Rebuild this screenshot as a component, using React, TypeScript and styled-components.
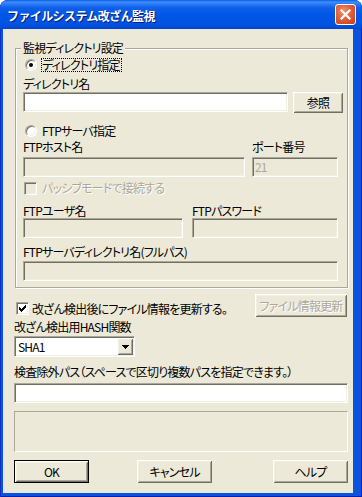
import React from "react";
import styled, { createGlobalStyle, css } from "styled-components";

const FONT = `"Noto Sans CJK JP", "Noto Sans CJK SC", "Noto Sans", sans-serif`;

const GlobalStyle = createGlobalStyle`
  html, body { margin: 0; padding: 0; background: #ffffff; }
  body { font-family: ${FONT}; font-size: 12px; }
  #root { width: 362px; height: 497px; }
`;

const Window = styled.div`
  width: 362px;
  height: 497px;
  display: flex;
  flex-direction: column;
  background: #0A52E0;
  border-radius: 8px 8px 0 0;
  overflow: hidden;
  box-shadow: inset 1px 0 0 #0A32C4, inset -1px 0 0 #0022A8, inset 0 -1px 0 #0022A8;
  font-family: ${FONT};
  font-feature-settings: "palt";
  font-size: 12px;
  letter-spacing: -0.8px;
  color: #000;
`;

const TitleBar = styled.div`
  flex: none;
  height: 29px;
  box-sizing: border-box;
  display: flex;
  align-items: center;
  justify-content: space-between;
  padding: 0 6px 0 7px;
  border-radius: 8px 8px 0 0;
  background: linear-gradient(
    180deg,
    #0A5AE8 0px,
    #3E8FFA 2px,
    #2C7CF5 4px,
    #0E5FEA 8px,
    #0058E8 14px,
    #0054E3 22px,
    #0050DE 26px,
    #0044CC 29px
  );
`;

const TitleText = styled.span`
  color: #fff;
  font-weight: bold;
  font-size: 12px;
  line-height: 14px;
  margin-top: 3px;
  letter-spacing: -0.6px;
  font-feature-settings: normal;
  text-shadow: 1px 1px 0 #0A1A6E;
  white-space: nowrap;
`;

const CloseButton = styled.div`
  width: 21px;
  height: 21px;
  box-sizing: border-box;
  border: 1px solid #fff;
  border-radius: 3px;
  background: radial-gradient(circle at 40% 35%, #F29472 0%, #E2603A 45%, #C43B14 100%);
  display: flex;
  align-items: center;
  justify-content: center;
`;

const Client = styled.div`
  flex: 1;
  margin: 0 9px 4px 3px;
  background: #ECE9D8;
  padding: 19px 5px 10px 11px;
  display: flex;
  flex-direction: column;
`;

const GroupBox = styled.div`
  position: relative;
  margin-left: 1px;
  width: 333px;
  box-sizing: border-box;
  border: 1px solid #ACA899;
  box-shadow: 1px 1px 0 #fff, inset 1px 1px 0 #fff;
  padding: 9px 4px 6px 7px;
  display: flex;
  flex-direction: column;
`;

const Legend = styled.span`
  position: absolute;
  top: -7px;
  left: 5px;
  padding: 0 2px;
  background: #ECE9D8;
  line-height: 12px;
  white-space: nowrap;
`;

const Row = styled.div<{ $mt?: number; $gap?: number; $ml?: number; $align?: string }>`
  display: flex;
  align-items: ${(p) => p.$align ?? "center"};
  margin-top: ${(p) => p.$mt ?? 0}px;
  margin-left: ${(p) => p.$ml ?? 0}px;
  gap: ${(p) => p.$gap ?? 0}px;
`;

const Label = styled.div<{ $mt?: number }>`
  line-height: 12px;
  height: 12px;
  white-space: nowrap;
  margin-top: ${(p) => p.$mt ?? 0}px;
`;

const Field = styled.div<{ $w: number; $gap: number }>`
  width: ${(p) => p.$w}px;
  flex: none;
  display: flex;
  flex-direction: column;
  gap: ${(p) => p.$gap}px;
`;

const sunken = css`
  border: 1px solid;
  border-color: #ACA899 #fff #fff #ACA899;
  box-shadow: inset 1px 1px 0 #716F64, inset -1px -1px 0 #F1EFE2;
`;

const Radio = styled.span<{ $checked?: boolean }>`
  flex: none;
  width: 12px;
  height: 12px;
  box-sizing: border-box;
  border-radius: 50%;
  ${sunken};
  background: #fff;
  display: flex;
  align-items: center;
  justify-content: center;
  &::after {
    content: "";
    width: 4px;
    height: 4px;
    border-radius: 50%;
    background: #000;
    display: ${(p) => (p.$checked ? "block" : "none")};
  }
`;

const OptionLabel = styled.span<{ $focused?: boolean; $disabled?: boolean }>`
  line-height: 12px;
  padding-right: 1px;
  border: 1px dotted ${(p) => (p.$focused ? "#000" : "transparent")};
  white-space: nowrap;
  color: ${(p) => (p.$disabled ? "#ACA899" : "#000")};
  text-shadow: ${(p) => (p.$disabled ? "1px 1px 0 #fff" : "none")};
`;

const CheckBox = styled.span<{ $disabled?: boolean; $ml?: number }>`
  flex: none;
  width: 13px;
  height: 13px;
  box-sizing: border-box;
  margin-left: ${(p) => p.$ml ?? 0}px;
  ${sunken};
  background: ${(p) => (p.$disabled ? "#ECE9D8" : "#fff")};
  display: flex;
  align-items: center;
  justify-content: center;
`;

const TextBox = styled.div<{ $w: number; $disabled?: boolean }>`
  flex: none;
  width: ${(p) => p.$w}px;
  height: 20px;
  box-sizing: border-box;
  ${sunken};
  background: ${(p) => (p.$disabled ? "#ECE9D8" : "#fff")};
  color: ${(p) => (p.$disabled ? "#ACA899" : "#000")};
  padding: 0 2px;
  line-height: 18px;
  white-space: nowrap;
`;

const raised = css`
  box-shadow: inset 1px 1px 0 #fff, inset -1px -1px 0 #716F64, inset 2px 2px 0 #F1EFE2,
    inset -2px -2px 0 #ACA899;
`;

const Button = styled.div<{ $w: number; $h?: number; $default?: boolean; $disabled?: boolean }>`
  flex: none;
  width: ${(p) => p.$w}px;
  height: ${(p) => p.$h ?? 23}px;
  box-sizing: border-box;
  background: #ECE9D8;
  ${raised};
  border: ${(p) => (p.$default ? "1px solid #000" : "none")};
  display: flex;
  align-items: center;
  justify-content: center;
  line-height: 12px;
  white-space: nowrap;
  color: ${(p) => (p.$disabled ? "#ACA899" : "#000")};
  text-shadow: ${(p) => (p.$disabled ? "1px 1px 0 #fff" : "none")};
`;

const Combo = styled.div`
  width: 121px;
  height: 21px;
  box-sizing: border-box;
  ${sunken};
  background: #fff;
  padding: 1px;
  display: flex;
  align-items: stretch;
`;

const ComboText = styled.span`
  flex: 1;
  padding-left: 2px;
  line-height: 17px;
`;

const DropButton = styled.span`
  width: 16px;
  flex: none;
  background: #ECE9D8;
  ${raised};
  display: flex;
  align-items: center;
  justify-content: center;
`;

const StaticBox = styled.div`
  margin-top: 8px;
  height: 41px;
  box-sizing: border-box;
  border: 1px solid;
  border-color: #ACA899 #fff #fff #ACA899;
`;

const ButtonBar = styled.div`
  margin-top: 8px;
  display: flex;
  align-items: center;
`;

const Spacer = styled.div<{ $w?: number }>`
  flex: ${(p) => (p.$w === undefined ? 1 : "none")};
  width: ${(p) => p.$w ?? 0}px;
`;

const CheckMark = () => (
  <svg width="7" height="7" viewBox="0 0 7 7" shapeRendering="crispEdges">
    <polygon points="0,2 2,4 7,-1 7,2 2,7 0,5" fill="#000" />
  </svg>
);

export default function App() {
  return (
    <>
      <GlobalStyle />
      <Window>
        <TitleBar>
          <TitleText>ファイルシステム改ざん監視</TitleText>
          <CloseButton>
            <svg width="11" height="11" viewBox="0 0 11 11">
              <path d="M1.5 1.5 L9.5 9.5 M9.5 1.5 L1.5 9.5" stroke="#fff" strokeWidth="2.2" strokeLinecap="square" />
            </svg>
          </CloseButton>
        </TitleBar>
        <Client>
          <GroupBox>
            <Legend>監視ディレクトリ設定</Legend>
            <Row $ml={2} $gap={4}>
              <Radio $checked />
              <OptionLabel $focused>ディレクトリ指定</OptionLabel>
            </Row>
            <Label $mt={6}>ディレクトリ名</Label>
            <Row $mt={2} $gap={5} $align="flex-start">
              <TextBox $w={265} />
              <Button $w={50} $h={21}>参照</Button>
            </Row>
            <Row $mt={11} $ml={2} $gap={4}>
              <Radio />
              <OptionLabel>FTPサーバ指定</OptionLabel>
            </Row>
            <Row $mt={3} $gap={7} $align="flex-start">
              <Field $w={222} $gap={4}>
                <Label>FTPホスト名</Label>
                <TextBox $w={222} $disabled />
              </Field>
              <Field $w={86} $gap={4}>
                <Label>ポート番号</Label>
                <TextBox $w={86} $disabled>21</TextBox>
              </Field>
            </Row>
            <Row $mt={4} $gap={4}>
              <CheckBox $ml={1} $disabled />
              <OptionLabel $disabled>パッシブモードで接続する</OptionLabel>
            </Row>
            <Row $mt={10} $gap={9} $align="flex-start">
              <Field $w={160} $gap={1}>
                <Label>FTPユーザ名</Label>
                <TextBox $w={160} $disabled />
              </Field>
              <Field $w={146} $gap={1}>
                <Label>FTPパスワード</Label>
                <TextBox $w={146} $disabled />
              </Field>
            </Row>
            <Row $mt={8} $align="flex-start">
              <Field $w={315} $gap={3}>
                <Label>FTPサーバディレクトリ名(フルパス)</Label>
                <TextBox $w={315} $disabled />
              </Field>
            </Row>
          </GroupBox>
          <Row $mt={6} $align="flex-start">
            <Row $mt={8} $ml={2} $gap={3}>
              <CheckBox>
                <CheckMark />
              </CheckBox>
              <Label>改ざん検出後にファイル情報を更新する。</Label>
            </Row>
            <Spacer />
            <Button $w={92} $disabled style={{ marginRight: 1 }}>
              ファイル情報更新
            </Button>
          </Row>
          <Label $mt={4}>改ざん検出用HASH関数</Label>
          <Row $mt={3}>
            <Combo>
              <ComboText>SHA1</ComboText>
              <DropButton>
                <svg width="7" height="4" viewBox="0 0 7 4" shapeRendering="crispEdges">
                  <polygon points="0,0 7,0 3.5,4" fill="#000" />
                </svg>
              </DropButton>
            </Combo>
          </Row>
          <Label $mt={9}>検査除外パス（スペースで区切り複数パスを指定できます。）</Label>
          <Row $mt={5}>
            <TextBox $w={334} />
          </Row>
          <StaticBox />
          <ButtonBar>
            <Button $w={75} $default>OK</Button>
            <Spacer $w={48} />
            <Button $w={75}>キャンセル</Button>
            <Spacer />
            <Button $w={75}>ヘルプ</Button>
          </ButtonBar>
        </Client>
      </Window>
    </>
  );
}
